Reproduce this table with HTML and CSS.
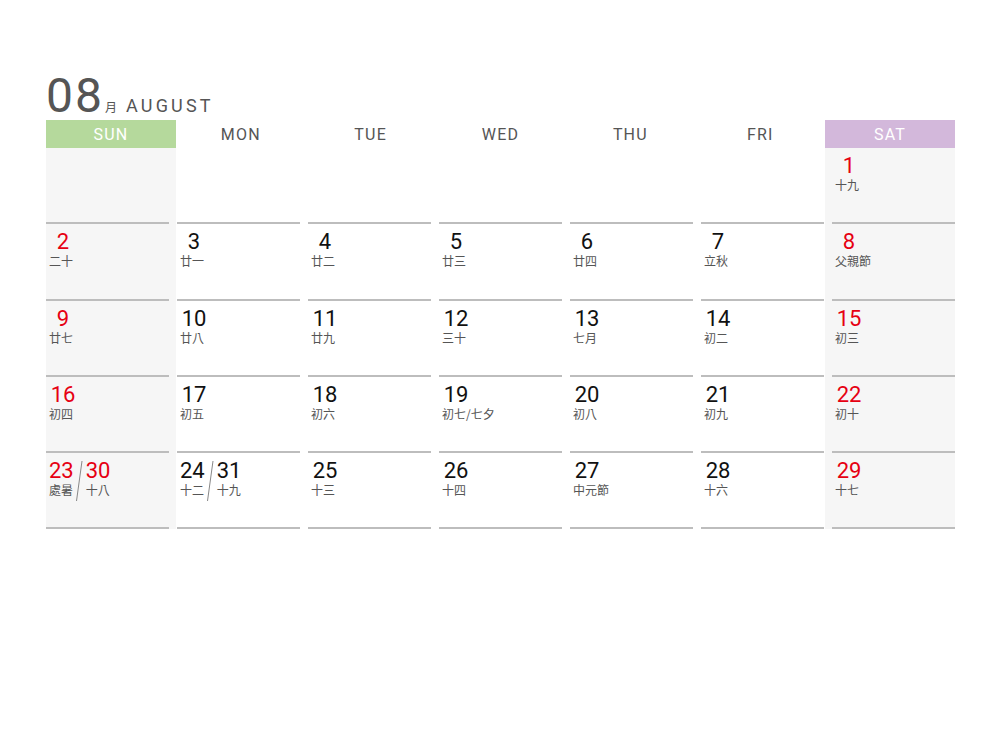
FILE: index.html
```html
<!DOCTYPE html>
<html lang="zh-Hant">
<head>
  <meta charset="UTF-8" />
  <meta name="viewport" content="width=device-width, initial-scale=1.0" />
  <title>08月 AUGUST</title>
  <link rel="stylesheet" href="styles.css">
</head>
<body>
  <main class="calendar">
    <div class="title">
      <span class="month-num">08</span>
      <span class="month-cjk">月</span>
      <span class="month-name">AUGUST</span>
    </div>

    <div class="weekdays">
      <div class="wd sun">SUN</div>
      <div class="wd">MON</div>
      <div class="wd">TUE</div>
      <div class="wd">WED</div>
      <div class="wd">THU</div>
      <div class="wd">FRI</div>
      <div class="wd sat">SAT</div>
    </div>

    <div class="days">
      <!-- week 1 -->
      <div class="day sun"></div>
      <div class="day"></div>
      <div class="day"></div>
      <div class="day"></div>
      <div class="day"></div>
      <div class="day"></div>
      <div class="day sat"><span class="num red">1</span><span class="lunar">十九</span></div>

      <!-- week 2 -->
      <div class="day sun"><span class="num red">2</span><span class="lunar">二十</span></div>
      <div class="day"><span class="num">3</span><span class="lunar">廿一</span></div>
      <div class="day"><span class="num">4</span><span class="lunar">廿二</span></div>
      <div class="day"><span class="num">5</span><span class="lunar">廿三</span></div>
      <div class="day"><span class="num">6</span><span class="lunar">廿四</span></div>
      <div class="day"><span class="num">7</span><span class="lunar">立秋</span></div>
      <div class="day sat"><span class="num red">8</span><span class="lunar">父親節</span></div>

      <!-- week 3 -->
      <div class="day sun"><span class="num red">9</span><span class="lunar">廿七</span></div>
      <div class="day"><span class="num">10</span><span class="lunar">廿八</span></div>
      <div class="day"><span class="num">11</span><span class="lunar">廿九</span></div>
      <div class="day"><span class="num">12</span><span class="lunar">三十</span></div>
      <div class="day"><span class="num">13</span><span class="lunar">七月</span></div>
      <div class="day"><span class="num">14</span><span class="lunar">初二</span></div>
      <div class="day sat"><span class="num red">15</span><span class="lunar">初三</span></div>

      <!-- week 4 -->
      <div class="day sun"><span class="num red">16</span><span class="lunar">初四</span></div>
      <div class="day"><span class="num">17</span><span class="lunar">初五</span></div>
      <div class="day"><span class="num">18</span><span class="lunar">初六</span></div>
      <div class="day"><span class="num">19</span><span class="lunar">初七/七夕</span></div>
      <div class="day"><span class="num">20</span><span class="lunar">初八</span></div>
      <div class="day"><span class="num">21</span><span class="lunar">初九</span></div>
      <div class="day sat"><span class="num red">22</span><span class="lunar">初十</span></div>

      <!-- week 5 -->
      <div class="day sun dual">
        <div class="part"><span class="num red">23</span><span class="lunar">處暑</span></div>
        <svg class="slash" width="9" height="40" viewBox="0 0 9 40"><line x1="7" y1="0" x2="1.5" y2="40" /></svg>
        <div class="part"><span class="num red">30</span><span class="lunar">十八</span></div>
      </div>
      <div class="day dual">
        <div class="part"><span class="num">24</span><span class="lunar">十二</span></div>
        <svg class="slash" width="9" height="40" viewBox="0 0 9 40"><line x1="7" y1="0" x2="1.5" y2="40" /></svg>
        <div class="part"><span class="num">31</span><span class="lunar">十九</span></div>
      </div>
      <div class="day"><span class="num">25</span><span class="lunar">十三</span></div>
      <div class="day"><span class="num">26</span><span class="lunar">十四</span></div>
      <div class="day"><span class="num">27</span><span class="lunar">中元節</span></div>
      <div class="day"><span class="num">28</span><span class="lunar">十六</span></div>
      <div class="day sat"><span class="num red">29</span><span class="lunar">十七</span></div>
    </div>
  </main>
</body>
</html>
```

FILE: styles.css
```css
body { margin: 0; background: #fff; font-family: Roboto, "Liberation Sans", "Noto Sans CJK TC", sans-serif; color: #555; }

.calendar { width: 909px; padding: 72px 0 0 46px; }

/* month title */
.title { display: flex; align-items: baseline; height: 48px; line-height: 1; }
.month-num { font-size: 48px; font-weight: 400; color: #555; letter-spacing: 2px; }
.month-cjk { font-family: "Noto Sans CJK TC", sans-serif; font-size: 12px; margin-left: 1px; color: #555; }
.month-name { font-size: 18px; letter-spacing: 3.2px; margin-left: 9px; color: #555; }

/* weekday header */
.weekdays { display: grid; grid-template-columns: repeat(7, 1fr); height: 28px; }
.wd { box-sizing: border-box; padding-top: 2px; line-height: 26px; text-align: center; font-size: 16px; color: #555; letter-spacing: 1.2px; }
.wd.sun { background: #b5d99c; color: #fff; }
.wd.sat { background: #d3b8db; color: #fff; }

/* day grid */
.days { display: grid; grid-template-columns: repeat(7, 123px); column-gap: 8px; grid-auto-rows: 76.3px; }
.day { box-sizing: border-box; border-bottom: 2px solid #bdbdbd; padding: 6px 0 0 3px; }
.day.sun { background: #f6f6f6; box-shadow: 7px 0 0 #f6f6f6; }
.day.sat { background: #f6f6f6; box-shadow: -7px 0 0 #f6f6f6; }

.num { display: block; width: 28px; text-align: center; font-size: 22px; line-height: 24px; color: #111; }
.num.red { color: #e60012; }
.lunar { display: block; font-family: "Noto Sans CJK TC", sans-serif; font-size: 12px; line-height: 14px; color: #555; white-space: nowrap; }

/* two dates in one cell */
.dual { display: flex; align-items: flex-start; }
.dual .num { width: auto; text-align: left; }
.part { display: flex; flex-direction: column; }
.slash { margin: 2px 2px 0 1px; flex: none; }
.slash line { stroke: #888; stroke-width: 1; }
```
